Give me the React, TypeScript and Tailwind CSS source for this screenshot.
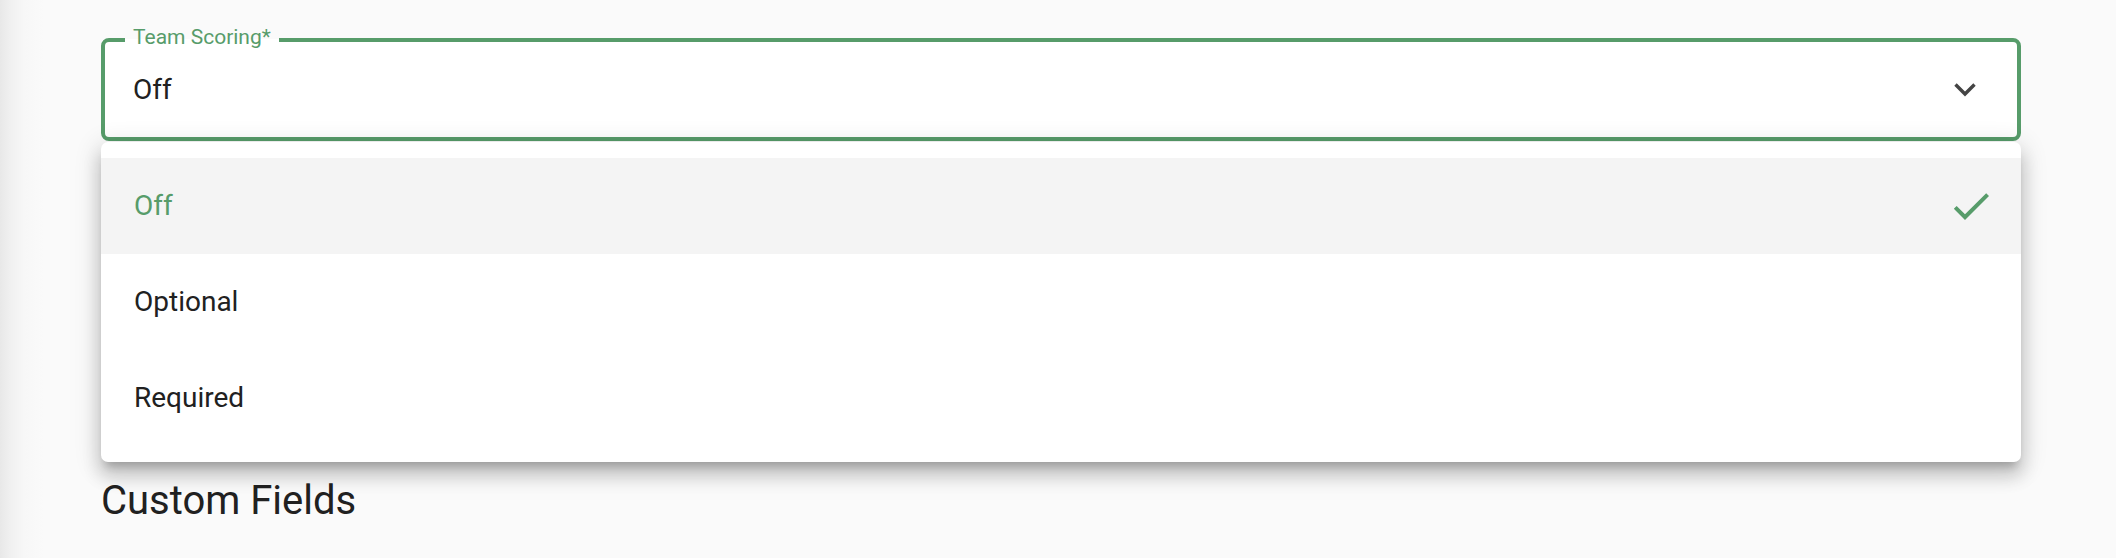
import React from "react";

const GREEN = "text-[#579c6a]";

const options = ["Off", "Optional", "Required"];

function ChevronDown() {
  return (
    <svg width="24" height="16" viewBox="0 0 24 16" fill="none" className="text-[#444444]">
      <path d="M2.5 2.5 L12 12 L21.5 2.5" stroke="currentColor" strokeWidth="3.4" />
    </svg>
  );
}

function CheckIcon() {
  return (
    <svg width="48" height="48" viewBox="0 0 24 24" className={GREEN}>
      <path fill="currentColor" d="M9 16.17 4.83 12l-1.42 1.41L9 19 21 7l-1.41-1.41z" />
    </svg>
  );
}

export default function App() {
  const selected = "Off";

  return (
    <div className="min-h-screen bg-[#fafafa] bg-[linear-gradient(to_right,#e8e8e8_0px,#f0f0f0_10px,#f7f7f7_24px,#fafafa_44px)] pl-[101px] pr-[95px] pt-[38px] font-['Roboto',sans-serif] text-[#212121]">
      <div className="relative">
        {/* outlined select */}
        <div className="relative flex h-[103px] items-center justify-between rounded-[8px] border-[4px] border-[#579c6a] bg-white pl-[28px] pr-[40px]">
          <span className="absolute left-[20px] top-[-17px] h-[24px] bg-[linear-gradient(to_bottom,#fafafa_60%,#ffffff_60%)] px-[8px] text-[21px] leading-[24px] text-[#579c6a]">
            Team Scoring*
          </span>
          <span className="text-[28px] leading-[32px]">Off</span>
          <ChevronDown />
        </div>

        {/* open menu */}
        <ul className="absolute left-0 right-0 top-[104px] z-10 rounded-[7px] bg-white py-[16px] shadow-[0_9px_9px_-5px_rgba(0,0,0,0.2),0_14px_17px_2px_rgba(0,0,0,0.14),0_5px_25px_4px_rgba(0,0,0,0.12)]">
          {options.map((opt) => {
            const active = opt === selected;
            return (
              <li
                key={opt}
                className={
                  active
                    ? "flex h-[96px] items-center justify-between bg-[#f4f4f4] pl-[33px] pr-[26px]"
                    : "flex h-[96px] items-center justify-between pl-[33px] pr-[26px]"
                }
              >
                <span className={active ? "text-[28px] leading-[32px] text-[#579c6a]" : "text-[28px] leading-[32px]"}>
                  {opt}
                </span>
                {active && <CheckIcon />}
              </li>
            );
          })}
        </ul>
      </div>

      <h2 className="mt-[336px] text-[40px] leading-[48px] font-normal">Custom Fields</h2>
    </div>
  );
}
